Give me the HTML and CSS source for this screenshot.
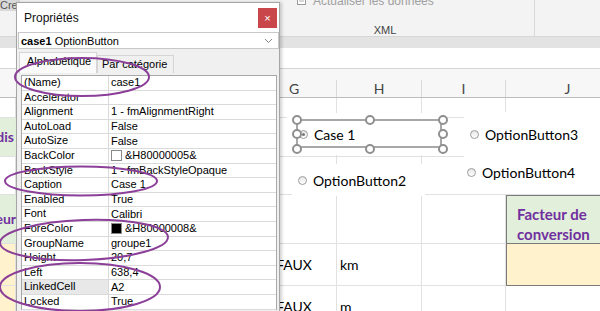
FILE: index.html
```html
<!DOCTYPE html>
<html lang="fr">
<head>
    <meta charset="UTF-8">
    <meta name="viewport" content="width=device-width, initial-scale=1.0">
    <title>Propriétés - OptionButton</title>
    <link rel="stylesheet" href="styles.css">
</head>
<body>
    <div class="excel">
        <div class="ribbon">
            <div class="rb-group rb-first"><span class="rb-cut">Crea</span></div>
            <div class="rb-group rb-xml">
                <div class="rb-cmd">
                    <svg width="9" height="8" viewBox="0 0 9 8"><rect x="0.5" y="0.5" width="8" height="7" fill="#fff" stroke="#9a9a9a"/><path d="M2 4h5" stroke="#b0b0b0"/></svg>
                    <span>Actualiser les données</span>
                </div>
                <div class="rb-label">XML</div>
            </div>
        </div>
        <div class="band"></div>
        <div class="formula"></div>

        <div class="colheads">
            <div class="ch"></div>
            <div class="ch">F</div>
            <div class="ch">G</div>
            <div class="ch">H</div>
            <div class="ch">I</div>
            <div class="ch">J</div>
        </div>

        <div class="sheet">
            <!-- row 1 -->
            <div class="c"></div><div class="c"></div><div class="c"></div><div class="c"></div><div class="c"></div><div class="c"></div>
            <!-- row 2 -->
            <div class="c title green ind-1">Unités dis</div><div class="c green"></div><div class="c"></div><div class="c"></div><div class="c"></div><div class="c"></div>
            <!-- row 3 -->
            <div class="c"></div><div class="c"></div><div class="c"></div><div class="c"></div><div class="c"></div><div class="c"></div>
            <!-- row 4 -->
            <div class="c title green ind-2">Facteur</div><div class="c green"></div><div class="c"></div><div class="c"></div><div class="c"></div>
            <div class="c title green boxed">Facteur de<br>conversion</div>
            <!-- row 5 -->
            <div class="c beige"></div><div class="c beige"></div><div class="c center">FAUX</div><div class="c">km</div><div class="c"></div><div class="c beige boxed"></div>
            <!-- row 6 -->
            <div class="c beige"></div><div class="c beige"></div><div class="c center">FAUX</div><div class="c">m</div><div class="c"></div><div class="c"></div>
        </div>

        <div class="ctl ctl-case1">
            <span class="radio on"></span><span>Case 1</span>
        </div>
        <div class="ctl ctl-ob2">
            <span class="radio"></span><span>OptionButton2</span>
        </div>
        <div class="ctl-pair">
            <div class="ctl-row ob3"><span class="radio"></span><span>OptionButton3</span></div>
            <div class="ctl-row ob4"><span class="radio"></span><span>OptionButton4</span></div>
        </div>

        <div class="sel">
            <span class="hd tl"></span><span class="hd tm"></span><span class="hd tr"></span>
            <span class="hd ml"></span><span class="hd mr"></span>
            <span class="hd bl"></span><span class="hd bm"></span><span class="hd br"></span>
        </div>
    </div>

    <div class="props">
        <div class="props-title">
            <span>Propriétés</span>
            <span class="close">×</span>
        </div>
        <div class="combo">
            <span><b>case1</b> OptionButton</span>
            <svg width="9" height="6" viewBox="0 0 9 6"><path d="M1 1l3.5 3.5L8 1" fill="none" stroke="#888"/></svg>
        </div>
        <div class="tabs">
            <span class="tab active">Alphabétique</span>
            <span class="tab">Par catégorie</span>
        </div>
        <div class="plist">
            <div class="pr"><span class="pn">(Name)</span><span class="pv">case1</span></div>
            <div class="pr"><span class="pn">Accelerator</span><span class="pv"></span></div>
            <div class="pr"><span class="pn">Alignment</span><span class="pv">1 - fmAlignmentRight</span></div>
            <div class="pr"><span class="pn">AutoLoad</span><span class="pv">False</span></div>
            <div class="pr"><span class="pn">AutoSize</span><span class="pv">False</span></div>
            <div class="pr"><span class="pn">BackColor</span><span class="pv"><i class="sw"></i>&amp;H80000005&amp;</span></div>
            <div class="pr"><span class="pn">BackStyle</span><span class="pv">1 - fmBackStyleOpaque</span></div>
            <div class="pr"><span class="pn">Caption</span><span class="pv">Case 1</span></div>
            <div class="pr"><span class="pn">Enabled</span><span class="pv">True</span></div>
            <div class="pr"><span class="pn">Font</span><span class="pv">Calibri</span></div>
            <div class="pr"><span class="pn">ForeColor</span><span class="pv"><i class="sw dark"></i>&amp;H80000008&amp;</span></div>
            <div class="pr"><span class="pn">GroupName</span><span class="pv">groupe1</span></div>
            <div class="pr"><span class="pn">Height</span><span class="pv">20,7</span></div>
            <div class="pr"><span class="pn">Left</span><span class="pv">638,4</span></div>
            <div class="pr"><span class="pn hl">LinkedCell</span><span class="pv">A2</span></div>
            <div class="pr"><span class="pn">Locked</span><span class="pv">True</span></div>
        </div>
    </div>

    <svg class="marks" width="600" height="311" viewBox="0 0 600 311">
        <ellipse cx="82" cy="77" rx="67" ry="19"/>
        <ellipse cx="81" cy="181" rx="76" ry="14.5"/>
        <ellipse cx="84" cy="240" rx="84" ry="20" transform="rotate(-2 84 240)"/>
        <ellipse cx="80" cy="287" rx="80" ry="24"/>
    </svg>
</body>
</html>
```

FILE: styles.css
```css
* {
    margin: 0;
    padding: 0;
    box-sizing: border-box;
}

body {
    width: 600px;
    height: 311px;
    overflow: hidden;
    position: relative;
    background: #fff;
    font-family: 'Lato', 'Liberation Sans', sans-serif;
    color: #000;
}

.excel {
    position: relative;
    width: 600px;
    height: 311px;
    overflow: hidden;
}

/* ribbon */
.ribbon {
    height: 37px;
    display: flex;
    background: #f3f3f3;
    border-bottom: 1px solid #d6d6d6;
}

.rb-first {
    width: 236px;
}

.rb-cut {
    display: block;
    width: 20px;
    height: 11px;
    background: #d9d9d9;
    font-family: 'Liberation Sans', sans-serif;
    font-size: 11px;
    line-height: 10px;
    color: #555;
}

.rb-xml {
    width: 299px;
    height: 36px;
    border-right: 1px solid #d9d9d9;
    display: flex;
    flex-direction: column;
    justify-content: space-between;
}

.rb-cmd {
    display: flex;
    align-items: center;
    gap: 7px;
    margin-top: -6px;
    padding-left: 61px;
    font-family: 'Liberation Sans', sans-serif;
    font-size: 12px;
    color: #a0a0a0;
}

.rb-label {
    text-align: center;
    font-family: 'Liberation Sans', sans-serif;
    font-size: 11px;
    line-height: 12px;
    color: #444;
}

.band {
    height: 11px;
    background: #e3e3e3;
}

.formula {
    height: 21px;
    background: #fff;
    border-bottom: 1px solid #d5d5d5;
}

/* sheet */
.colheads, .sheet {
    display: grid;
    grid-template-columns: 60px 236px 85px 85px 84px 124px;
    margin-left: -44px;
}

.colheads {
    height: 29px;
    padding-top: 11px;
    background: #f7f7f7;
    border-bottom: 1px solid #bdbdbd;
}

.ch {
    text-align: center;
    font-size: 14px;
    line-height: 17px;
    color: #444;
    border-right: 1px solid #dadada;
}

.ch:first-child {
    border-right: none;
}

.sheet {
    grid-template-rows: 20px 39px 38px 49px 42px 42px;
}

.c {
    border-right: 1px solid #e1e1e1;
    border-bottom: 1px solid #e1e1e1;
    font-size: 14px;
    padding-left: 3px;
    display: flex;
    align-items: center;
    white-space: nowrap;
    overflow: hidden;
}

.c.center {
    justify-content: center;
    padding-left: 0;
}

.title {
    font-weight: bold;
    color: #7030a0;
    line-height: 20px;
}

.green {
    background: #e2efda;
}

.beige {
    background: #fff2cc;
}

.green:first-child, .beige:first-child {
    border-right: none;
}

.ind-1 {
    justify-content: flex-end;
    padding-right: 2px;
    border-right: none;
}

.ind-2 {
    justify-content: flex-end;
    padding-right: 0;
    border-right: none;
}

.boxed {
    border: 1px solid #7a7a7a;
    border-right: none;
    padding-left: 10px;
}

.title.boxed {
    font-size: 15px;
    padding-top: 8px;
}

.beige.boxed {
    border-top: none;
}

/* form controls on the sheet */
.ctl, .ctl-pair {
    position: absolute;
    background: #fff;
    font-size: 14px;
}

.ctl {
    display: flex;
    align-items: center;
}

.ctl-case1 {
    left: 287px;
    top: 113px;
    width: 160px;
    height: 42px;
    padding-left: 12px;
    gap: 6px;
}

.ctl-ob2 {
    left: 292px;
    top: 164px;
    width: 133px;
    height: 32px;
    padding-left: 6px;
    gap: 6px;
}

.ctl-pair {
    left: 464px;
    top: 112px;
    width: 136px;
    height: 82px;
    display: flex;
    flex-direction: column;
}

.ctl-row {
    display: flex;
    align-items: center;
    gap: 6px;
}

.ob3 {
    height: 44px;
    padding-left: 6px;
}

.ob4 {
    height: 32px;
    padding-left: 3px;
}

.radio {
    width: 9px;
    height: 9px;
    border: 1px solid #9c9c9c;
    border-radius: 50%;
    background: linear-gradient(#e6e6e6, #fff);
    flex: none;
    position: relative;
}

.radio.on::after {
    content: '';
    position: absolute;
    left: 2px;
    top: 2px;
    width: 3px;
    height: 3px;
    border-radius: 50%;
    background: #777;
}

/* selection frame around Case 1 */
.sel {
    position: absolute;
    left: 296px;
    top: 119px;
    width: 146px;
    height: 29px;
    border: 2px solid #a8a8a8;
}

.hd {
    position: absolute;
    width: 10px;
    height: 10px;
    border: 2px solid #8f8f8f;
    border-radius: 50%;
    background: #fff;
    transform: translate(-50%, -50%);
}

.tl, .ml, .bl { left: -1px; }
.tm, .bm { left: 72px; }
.tr, .mr, .br { left: 145px; }
.tl, .tm, .tr { top: -1px; }
.ml, .mr { top: 13px; }
.bl, .bm, .br { top: 28px; }

/* properties window */
.props {
    position: absolute;
    left: 16px;
    top: 2px;
    width: 264px;
    height: 309px;
    overflow: hidden;
    background: #f0f0f0;
    border: 1px solid #a5a5a5;
    border-bottom: none;
    box-shadow: 2px 0 3px rgba(0, 0, 0, 0.18);
    font-family: 'Liberation Sans', sans-serif;
    font-size: 11px;
}

.props-title {
    height: 29px;
    background: #fff;
    display: flex;
    align-items: center;
    justify-content: space-between;
    padding-left: 7px;
    padding-right: 2px;
    font-size: 12px;
    color: #111;
}

.close {
    width: 19px;
    height: 20px;
    background: #c9474a;
    color: #fff;
    font-size: 11px;
    display: flex;
    align-items: center;
    justify-content: center;
    margin-top: 1px;
}

.combo {
    height: 17px;
    margin-left: 1px;
    background: #fff;
    border: 1px solid #c8c8c8;
    display: flex;
    align-items: center;
    justify-content: space-between;
    padding: 0 5px 0 2px;
}

.tabs {
    height: 24px;
    display: flex;
    align-items: flex-end;
    padding-left: 2px;
}

.tab {
    height: 18px;
    padding: 0 6px 0 4px;
    border: 1px solid #d5d5d5;
    border-bottom: none;
    background: #f0f0f0;
    line-height: 16px;
}

.tab.active {
    height: 21px;
    width: 78px;
    padding-left: 7px;
    background: #fafafa;
}

.plist {
    margin: 2px 2px 0 4px;
    background: #fff;
    border: 1px solid #a8a8a8;
    border-bottom: none;
}

.pr {
    height: 14.6px;
    display: flex;
    border-bottom: 1px solid #dadada;
    line-height: 13px;
}

.pn {
    width: 87px;
    padding-left: 2px;
    border-right: 1px solid #dadada;
}

.pn.hl {
    background: #e8e8e8;
}

.pv {
    padding-left: 2px;
    display: flex;
    align-items: center;
    gap: 3px;
    white-space: nowrap;
}

.sw {
    width: 11px;
    height: 11px;
    border: 1px solid #8a8a8a;
    background: #fff;
}

.sw.dark {
    background: #000;
}

/* annotation ellipses */
.marks {
    position: absolute;
    left: 0;
    top: 0;
    pointer-events: none;
}

.marks ellipse {
    fill: none;
    stroke: #8b3f98;
    stroke-width: 2;
}
```
